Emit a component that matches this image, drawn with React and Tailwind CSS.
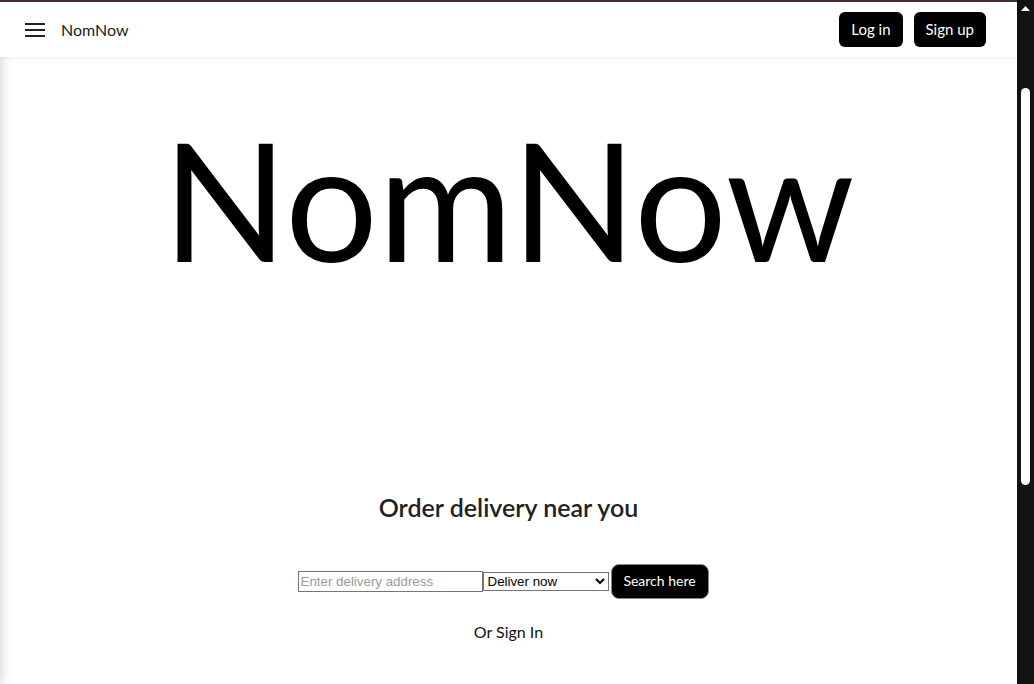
import { useState } from 'react';

function Hamburger() {
  return (
    <svg width="22" height="18" viewBox="0 0 22 18" className="text-[#222]">
      <rect x="1" y="2" width="20" height="2" fill="currentColor" />
      <rect x="1" y="8" width="20" height="2" fill="currentColor" />
      <rect x="1" y="14" width="20" height="2" fill="currentColor" />
    </svg>
  );
}

function Scrollbar() {
  return (
    <div className="flex w-[17px] shrink-0 flex-col items-center bg-[#121212]">
      <svg width="17" height="17" viewBox="0 0 17 17" className="shrink-0">
        <path d="M4 11 L8.5 6 L13 11 Z" fill="#fff" />
      </svg>
      <div className="mt-[71px] h-[397px] w-[9px] rounded-full bg-white" />
    </div>
  );
}

export default function App() {
  const [address, setAddress] = useState('');

  return (
    <div className="flex h-[684px] w-full overflow-hidden bg-white font-['Lato','Noto_Sans',sans-serif]">
      <div className="relative flex min-w-0 flex-1 flex-col">
        <div className="h-[2px] bg-[#4a302d]" />
        <header className="z-10 flex h-[55px] items-center bg-white pl-6 pr-[31px] shadow-[0_1px_4px_rgba(0,0,0,0.08)]">
          <button className="flex items-center">
            <Hamburger />
          </button>
          <span className="ml-[15px] text-base text-[#222]">NomNow</span>
          <div className="ml-auto flex items-center gap-[11px]">
            <button className="h-[35px] rounded-[6px] bg-black px-3 text-[15px] text-white">Log in</button>
            <button className="h-[35px] rounded-[6px] bg-black px-3 text-[15px] text-white">Sign up</button>
          </div>
        </header>

        <main className="flex flex-1 flex-col items-center">
          <h1 className="mt-[60px] text-[164px] leading-none text-black">NomNow</h1>

          <h2 className="mt-[208px] text-[25px] font-semibold text-[#222]">Order delivery near you</h2>

          <form className="mr-[11px] mt-[37px] flex items-center" onSubmit={(e) => e.preventDefault()}>
            <input
              type="text"
              value={address}
              onChange={(e) => setAddress(e.target.value)}
              placeholder="Enter delivery address"
              className="h-[21px] w-[185px] border border-[#767676] px-[2px] font-['Liberation_Sans',Arial,sans-serif] text-[13.33px] text-black placeholder:text-[#9a9a9a]"
            />
            <select className="h-[19px] w-[126px] border border-[#767676] bg-white font-['Liberation_Sans',Arial,sans-serif] text-[13.33px] text-black">
              <option>Deliver now</option>
              <option>Schedule for later</option>
            </select>
            <button
              type="submit"
              className="ml-[2px] h-[35px] w-[98px] rounded-[8px] border border-[#888] bg-black text-sm text-white"
            >
              Search here
            </button>
          </form>

          <p className="mt-[21px] text-base text-[#111]">Or Sign In</p>
        </main>

        <div className="pointer-events-none absolute left-[-300px] top-0 h-full w-[300px] shadow-[0_0_12px_rgba(0,0,0,0.22)]" />
      </div>
      <Scrollbar />
    </div>
  );
}
